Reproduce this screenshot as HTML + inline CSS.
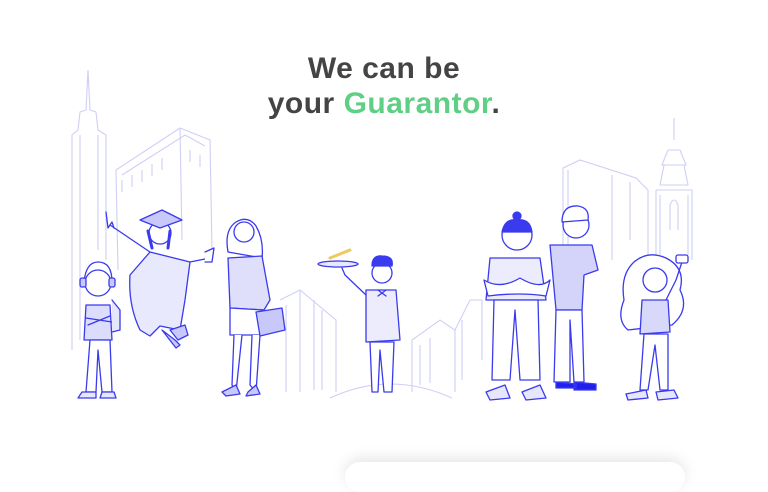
<!DOCTYPE html>
<html><head><meta charset="utf-8"><style>
html,body{margin:0;padding:0;background:#fff;width:768px;height:471px;overflow:hidden;font-family:"Liberation Sans",sans-serif}
h1{position:absolute;top:51px;left:0;width:768px;margin:0;text-align:center;font-size:30px;line-height:35px;font-weight:700;color:#444;letter-spacing:0.5px}
h1 span{color:#5fcf85}
svg{position:absolute;left:0;top:0}
.sh{position:absolute;left:345px;top:462px;width:340px;height:30px;border-radius:16px;box-shadow:0 -4px 14px rgba(0,0,0,0.10);background:#fff}
</style></head><body>
<svg width="768" height="471" viewBox="0 0 768 471">
<g fill="none" stroke="#cfcff6" stroke-width="1.1">
<path d="M88 70 L86 110 L80 112 L78 130 L72 135 L72 350 M88 70 L90 110 L96 112 L98 130 L106 135 L106 260"/>
<path d="M80 135 L80 340 M98 135 L98 250"/>
<path d="M116 170 L180 128 L210 140 L212 250 M116 170 L118 270 M122 175 L185 135 L205 146 M180 128 L182 240"/>
<path d="M122 180 v12 M132 175 v12 M142 170 v12 M152 164 v12 M162 158 v12 M190 150 v12 M200 155 v12"/>
<path d="M280 300 L300 290 L336 320 L336 392 M286 305 L286 392 M300 290 L300 392 M314 300 L314 390 M322 310 L322 390"/>
<path d="M412 392 L412 340 L440 320 L455 330 L455 392 M455 330 L470 300 L482 300 L482 360 M420 345 v40 M430 338 v45 M462 320 v60"/>
<path d="M330 398 Q390 370 452 398"/>
<path d="M563 260 L563 168 L580 160 L636 178 L648 190 L648 260 M568 170 L568 260 M612 175 L612 260 M630 182 L630 240"/>
<path d="M674 118 L674 140 M668 150 L680 150 L686 165 L662 165 L668 150 M664 165 L660 185 L688 185 L684 165 M656 190 L692 190 L692 260 M656 190 L656 255 M670 230 L670 205 Q674 195 678 205 L678 230 M660 195 v60 M688 195 v60"/>
</g>
<g stroke="#3a3aee" stroke-width="1.3" stroke-linejoin="round" stroke-linecap="round">
<g fill="#fff">
<path d="M86 305 L84 340 L112 340 L110 305 Z" fill="#dcdcfc"/>
<path d="M90 340 L86 392 L96 392 L98 350 L102 392 L112 392 L110 340 Z"/>
<path d="M78 398 L96 398 L96 392 L82 392 Z M100 398 L116 398 L114 392 L102 392 Z" fill="#e6e6fd"/>
<circle cx="98" cy="283" r="13"/>
<path d="M84 282 Q86 262 98 262 Q112 262 112 282" fill="none"/>
<rect x="80" y="278" width="6" height="9" rx="2" fill="#c8c8fb"/>
<rect x="109" y="278" width="6" height="9" rx="2" fill="#c8c8fb"/>
<path d="M86 318 L112 322 M88 325 L110 316"/>
<path d="M112 300 L120 310 L120 330 L112 332" fill="#e6e6fd"/>
</g>
<g fill="#fff">
<path d="M150 252 L130 275 Q128 305 140 330 L150 336 L160 326 L180 330 L185 300 L190 262 Z" fill="#e9e9fd"/>
<path d="M150 252 L110 225 M190 262 L210 258"/>
<path d="M106 212 L108 228 L112 222 L114 228" fill="none"/>
<path d="M205 252 L214 248 L212 262 L205 262" fill="#fff"/>
<circle cx="160" cy="233" r="11"/>
<path d="M148 231 L152 248 M170 231 L168 248" stroke-width="3"/>
<path d="M140 220 L162 210 L182 220 L160 228 Z" fill="#c8c8fb"/>
<path d="M170 330 L185 325 L188 335 L178 340 Z M162 330 L175 340 L180 345 L176 348 Z" fill="#c8c8fb"/>
</g>
<g fill="#fff">
<path d="M228 252 Q224 230 236 222 Q248 215 256 226 Q264 240 262 258 Z" fill="#fff"/>
<circle cx="244" cy="232" r="10"/>
<path d="M228 258 L262 256 L270 300 L264 310 L230 308 Z" fill="#dfdffc"/>
<path d="M230 308 L264 310 L264 335 L230 335 Z"/>
<path d="M234 335 L232 385 L236 392 L242 335 M252 335 L250 385 L256 392 L260 335"/>
<path d="M222 392 L236 385 L240 394 L226 396 Z M248 392 L256 385 L260 394 L246 396 Z" fill="#c8c8fb"/>
<path d="M256 312 L282 308 L285 330 L260 336 Z" fill="#c8c8fb"/>
</g>
<g fill="#fff">
<path d="M366 290 L396 290 L400 340 L366 342 Z" fill="#ececfd"/>
<path d="M370 342 L372 392 L378 392 L380 350 L384 392 L392 392 L394 342 Z"/>
<circle cx="382" cy="273" r="10"/>
<path d="M372 266 Q372 255 382 256 Q394 256 392 266 Z" fill="#3a3aee"/>
<path d="M366 295 L345 275 L342 268"/>
<ellipse cx="338" cy="264" rx="20" ry="3" fill="#e8e8fd"/>
<path d="M378 290 L386 296 M386 290 L378 296"/>
</g>
<path d="M330 258 L350 250" stroke="#f0c860" stroke-width="3" fill="none"/>
<g fill="#fff">
<path d="M490 258 L540 258 L546 300 L486 300 Z" fill="#ececfd"/>
<path d="M494 300 L492 380 L510 380 L515 310 L520 380 L540 380 L538 300 Z"/>
<circle cx="517" cy="235" r="15"/>
<path d="M502 232 Q505 218 517 220 Q530 218 532 232 Z" fill="#3a3aee"/>
<circle cx="517" cy="216" r="4" fill="#3a3aee"/>
<path d="M484 280 Q500 290 520 278 Q540 290 550 280 L546 296 Q520 292 488 296 Z" fill="#fff"/>
<path d="M486 392 L505 385 L510 398 L490 400 Z M522 392 L540 385 L546 398 L526 400 Z" fill="#e6e6fd"/>
</g>
<g fill="#fff">
<path d="M550 245 L592 245 L598 270 L584 275 L582 310 L556 310 Z" fill="#d4d4fb"/>
<path d="M556 310 L554 382 L570 382 L570 320 L574 382 L584 382 L582 310 Z"/>
<circle cx="576" cy="225" r="13"/>
<path d="M562 222 Q562 205 578 206 Q590 208 588 220 Z" fill="#fff"/>
<path d="M556 382 L576 384 L576 388 L556 388 Z M574 382 L596 384 L596 390 L574 390 Z" fill="#2020ee"/>
</g>
<g fill="#fff">
<path d="M634 262 Q620 275 624 300 Q616 320 628 330 L672 325 Q690 310 680 290 Q686 268 666 258 Q648 250 634 262 Z"/>
<circle cx="655" cy="280" r="12"/>
<path d="M642 300 L668 300 L670 332 L640 334 Z" fill="#d8d8fb"/>
<path d="M644 334 L640 390 L648 390 L655 345 L660 390 L668 390 L668 334 Z"/>
<path d="M666 300 L676 280 L682 262" fill="none"/>
<rect x="676" y="255" width="12" height="8" rx="2"/>
<path d="M626 394 L646 390 L648 398 L628 400 Z M656 392 L674 390 L678 398 L658 400 Z" fill="#e6e6fd"/>
</g>
</g>
</svg>
<h1>We can be<br>your <span>Guarantor</span>.</h1>
<div class="sh"></div>
</body></html>
